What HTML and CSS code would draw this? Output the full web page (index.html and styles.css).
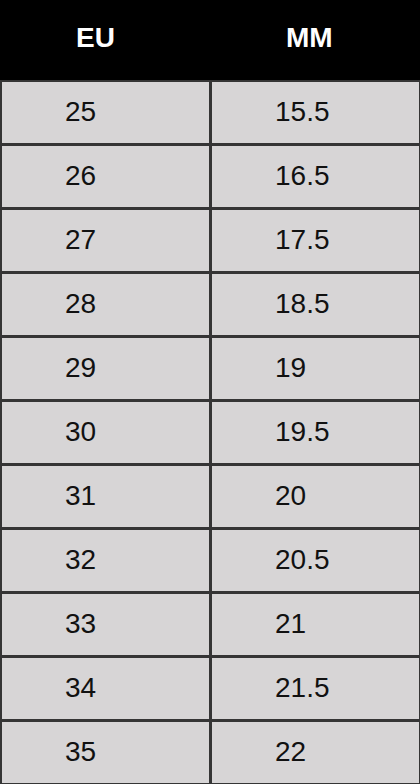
FILE: index.html
```html
<!DOCTYPE html>
<html>
<head>
<meta charset="utf-8">
<link rel="stylesheet" href="styles.css">
</head>
<body>
<div class="sheet">
  <div class="head">
    <div class="hcell">EU</div>
    <div class="hcell">MM</div>
  </div>
  <div class="grid">
    <div class="cell">25</div><div class="cell">15.5</div>
    <div class="cell">26</div><div class="cell">16.5</div>
    <div class="cell">27</div><div class="cell">17.5</div>
    <div class="cell">28</div><div class="cell">18.5</div>
    <div class="cell">29</div><div class="cell">19</div>
    <div class="cell">30</div><div class="cell">19.5</div>
    <div class="cell">31</div><div class="cell">20</div>
    <div class="cell">32</div><div class="cell">20.5</div>
    <div class="cell">33</div><div class="cell">21</div>
    <div class="cell">34</div><div class="cell">21.5</div>
    <div class="cell">35</div><div class="cell">22</div>
  </div>
</div>
</body>
</html>
```
FILE: styles.css
```css
html, body {
  margin: 0;
  padding: 0;
  background: #d7d5d6;
}
body {
  font-family: "Liberation Sans", Arial, sans-serif;
  width: 420px;
  height: 784px;
  overflow: hidden;
}
.sheet {
  width: 420px;
}
.head {
  display: grid;
  grid-template-columns: 210px 210px;
  height: 80px;
  background: #000;
}
.hcell {
  color: #fff;
  font-weight: bold;
  font-size: 28px;
  display: flex;
  align-items: center;
  padding-left: 76px;
  padding-bottom: 4px;
}
.grid {
  display: grid;
  grid-template-columns: 207px 207px;
  grid-auto-rows: 61px;
  gap: 3px;
  padding: 2px 1px 3px 2px;
  background: #353535;
}
.cell {
  background: #d7d5d6;
  color: #111;
  font-size: 28px;
  display: flex;
  align-items: center;
  padding-left: 63px;
  padding-bottom: 2px;
}
```
